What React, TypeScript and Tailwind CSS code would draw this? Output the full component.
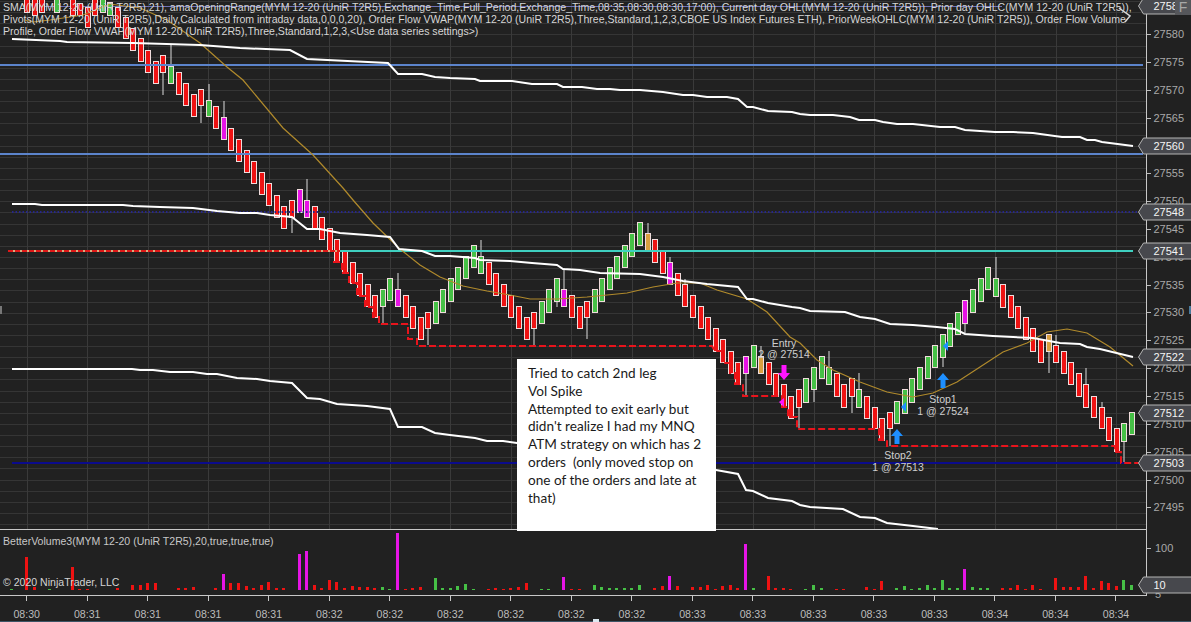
type Color = "r" | "g" | "m" | "o";
type Bar = [number, number, Color, number?, number?];

const fills: Record<Color, string> = { r: "#ee1212", g: "#46c046", m: "#e614e6", o: "#d9a040" };
const u = undefined;

const barX = (i: number) => 26.7 + 7.566 * i;

// body top, body bottom, colour, wick top, wick bottom (all in page px)
const bars: (Bar | null)[] = [
  [-10, 12, "r"], [-7, 15, "r"], [-10, 12, "r"], null, [-10, 12, "g"], null, [-7, 15, "r"], [3, 15, "r"],
  [7, 27, "r"], [-7, 15, "r"], [-10, 12, "g"], [2, 15, "g"], [7, 27, "r"], [17, 38, "r"], [28, 50, "r"], [38, 61, "r"],
  [50, 72, "r"], [61, 83, "r"], [55, 72, "r", u, 95], [66, 83, "g", 44], [72, 94, "r"], [83, 105, "r"], [94, 116, "r"], [89, 105, "r", u, 123],
  [100, 116, "g", 84], [106, 128, "r"], [117, 139, "m", 101], [128, 150, "r"], [139, 161, "r"], [150, 172, "r"], [161, 183, "r"], [172, 194, "r"],
  [183, 205, "r"], [195, 217, "r"], [206, 228, "r"], [200, 217, "r", u, 233], [189, 212, "m"], [200, 217, "m", 179], [206, 228, "r"], [217, 239, "r"],
  [228, 251, "r"], [239, 262, "r"], [251, 273, "r"], [262, 283, "r"], [273, 295, "r"], [284, 306, "r"], [295, 317, "r"], [289, 306, "g", u, 323],
  [278, 300, "g"], [289, 306, "m", 273], [295, 317, "r"], [306, 328, "r"], [317, 339, "r"], [312, 328, "r", u, 345], [301, 323, "g"], [289, 312, "g"],
  [278, 301, "g"], [267, 289, "g"], [256, 278, "g"], [245, 267, "g"], [256, 273, "g", 240], [262, 284, "r"], [273, 295, "r"], [284, 306, "r"],
  [295, 317, "r"], [306, 328, "r"], [317, 339, "r"], [312, 328, "r", u, 345], [301, 323, "g"], [289, 312, "g"], [278, 301, "g", u, 307], [289, 306, "m", 268],
  [295, 317, "r"], [306, 328, "r"], [301, 317, "r", u, 339], [289, 312, "g"], [278, 301, "g"], [267, 289, "g"], [256, 278, "g"], [245, 267, "g"],
  [233, 256, "g"], [222, 245, "g"], [233, 251, "o", 223], [239, 262, "r"], [251, 273, "r"], [262, 284, "m", 257], [273, 295, "r"], [284, 306, "r", 279],
  [295, 317, "r"], [306, 328, "r"], [317, 339, "r"], [328, 351, "r"], [339, 362, "r"], [351, 373, "r"], [362, 384, "r"], [356, 373, "m", u, 396],
  [345, 367, "g"], [356, 373, "o", 346], [362, 384, "r"], [373, 396, "r"], [384, 407, "r"], [396, 418, "r"], [389, 407, "r", u, 428], [378, 402, "g"],
  [367, 389, "g", u, 402], [356, 378, "g"], [367, 384, "g", 351], [373, 396, "r"], [384, 407, "r"], [378, 396, "r", u, 413], [389, 407, "g", 373], [396, 418, "r"],
  [407, 428, "r"], [418, 440, "r"], [412, 428, "r", u, 446], [401, 423, "g"], [389, 413, "g"], [378, 402, "g"], [367, 389, "g"], [356, 378, "g"],
  [345, 367, "g"], [334, 357, "g", u, 367], [323, 346, "g"], [312, 334, "g"], [300, 323, "m", u, 333], [289, 312, "g"], [278, 301, "g"], [267, 289, "g"],
  [278, 296, "g", 257], [284, 307, "r"], [295, 317, "r"], [306, 328, "r"], [317, 339, "r"], [328, 351, "r"], [339, 362, "r"], [334, 351, "o", u, 373],
  [345, 362, "r", 335], [351, 373, "r"], [362, 384, "r"], [373, 396, "r"], [384, 407, "r", 368], [396, 417, "r"], [407, 428, "r", 402], [417, 440, "r"],
  [428, 451, "r"], [423, 441, "g", u, 462], [412, 434, "g"],
];

const volumes: [number, number, Color][] = [
  [-2, 1, "g"], [0, 33, "r"], [1, 3, "r"], [3, 1, "g"], [6, 23, "r"], [7, 1, "r"], [8, 1, "r"], [12, 2, "r"], [14, 5, "r"], [15, 5, "r"], [16, 7, "r"], [17, 7, "r"],
  [20, 2, "r"], [21, 2, "r"], [22, 3, "r"], [25, 2, "r"], [26, 16, "m"], [27, 7, "r"], [28, 7, "r"], [29, 4, "r"], [30, 2, "r"], [31, 5, "r"], [32, 8, "r"], [33, 2, "r"], [34, 2, "r"],
  [36, 36, "m"], [37, 39, "m"], [38, 5, "r"], [39, 2, "r"], [40, 10, "r"], [41, 8, "r"], [42, 2, "r"], [43, 4, "r"], [44, 3, "r"], [45, 3, "r"], [46, 2, "r"], [47, 3, "g"], [48, 1, "g"], [49, 57, "m"],
  [50, 1, "r"], [51, 2, "r"], [52, 3, "r"], [54, 12, "g"], [55, 2, "g"], [56, 2, "g"], [57, 4, "g"], [58, 6, "g"], [59, 1, "g"], [61, 1, "r"], [62, 2, "r"], [63, 1, "r"], [64, 2, "r"], [65, 3, "r"], [66, 7, "r"],
  [68, 1, "g"], [69, 1, "g"], [71, 13, "m"], [72, 1, "r"], [73, 1, "r"], [75, 5, "g"], [76, 3, "g"], [77, 2, "g"], [78, 2, "g"], [79, 2, "g"], [80, 2, "g"], [81, 5, "g"], [83, 2, "r"], [84, 4, "r"], [85, 14, "m"], [86, 4, "r"],
  [88, 3, "r"], [89, 3, "r"], [90, 5, "r"], [91, 1, "r"], [92, 4, "r"], [93, 5, "r"], [94, 2, "r"], [95, 46, "m"], [96, 2, "g"], [98, 14, "r"], [99, 2, "r"], [100, 2, "r"], [101, 1, "r"],
  [103, 1, "g"], [104, 5, "g"], [105, 2, "g"], [107, 1, "r"], [108, 1, "r"], [111, 3, "r"], [112, 1, "r"], [113, 9, "r"], [115, 2, "g"], [116, 4, "g"], [117, 1, "g"], [118, 2, "g"], [119, 5, "g"], [120, 2, "g"], [121, 10, "g"],
  [122, 2, "g"], [123, 2, "g"], [124, 21, "m"], [125, 3, "g"], [126, 2, "g"], [127, 2, "g"], [129, 2, "r"], [130, 2, "r"], [131, 5, "r"], [132, 1, "r"], [133, 5, "r"], [134, 1, "r"], [136, 12, "r"], [137, 3, "r"], [138, 3, "r"],
  [139, 3, "r"], [140, 14, "r"], [141, 2, "r"], [142, 9, "r"], [143, 7, "r"], [144, 4, "r"], [145, 10, "g"], [146, 5, "g"],
];

const upperBand = "12,39 60,41 67,42 133,43 200,45 240,48 290,50 307,59 388,63 398,74 422,74 435,77 450,78 475,79 480,81 512,81 532,84 557,84 563,87 582,87 597,89 610,89 620,90 640,90 663,92 683,95 693,95 707,97 727,97 738,99 747,107 753,107 768,111 792,112 800,114 810,115 833,115 850,117 859,120 875,120 883,122 897,124 913,124 940,127 955,127 965,130 980,131 995,132 1013,132 1033,133 1062,137 1080,137 1087,140 1095,140 1102,142 1133,146";
const midBand = "12,204 35,204 42,205 123,205 133,206 160,207 193,208 217,211 240,213 257,213 270,215 292,217 307,229 320,229 340,233 367,235 390,237 399,249 422,251 435,256 450,256 475,258 480,260 510,261 532,263 557,265 563,269 580,270 600,273 640,274 663,277 683,281 707,284 738,287 747,299 753,299 768,303 792,307 800,308 810,311 845,312 860,317 875,319 890,324 913,325 937,327 955,329 965,334 993,336 1013,337 1033,338 1060,343 1080,344 1087,347 1100,349 1133,357";
const lowerBand = "12,369 132,369 140,370 153,370 170,372 193,372 207,374 217,374 237,378 257,379 270,381 292,383 307,398 320,399 337,404 367,406 390,409 398,427 422,427 435,433 450,435 475,438 487,441 503,441 517,443 716,470 738,474 746,490 753,491 768,498 792,501 800,505 810,507 843,509 860,517 875,518 887,523 913,526 938,529";
const sma = "25,20 33,22 50,20 83,15 110,4 140,8 167,20 200,43 227,67 243,80 283,128 313,155 343,188 353,200 373,223 400,249 420,265 440,277 463,286 487,291 510,295 530,299 557,299 587,297 627,293 653,287 677,283 700,283 717,290 747,299 767,312 790,337 800,343 817,360 833,370 860,382 887,392 913,397 933,393 957,382 980,367 1003,352 1027,343 1047,332 1067,329 1087,333 1110,347 1133,366";
const stopTrail = "333,262 342,262 342,273 349,273 349,283 357,283 357,296 365,296 365,307 373,307 373,317 379,317 379,324 408,324 408,339 417,339 417,346 712,346 715,351 722,351 722,363 730,363 730,373 735,373 735,384 743,384 743,396 776,396 782,396 782,407 788,407 788,417 797,417 797,429 875,429 879,429 879,440 887,440 887,446 1115,446 1115,452 1121,452 1121,463 1140,463";

const priceLabels: [string, number][] = [
  ["27580", 34], ["27575", 62], ["27570", 90], ["27565", 118], ["27555", 173], ["27550", 201], ["27545", 229], ["27540", 257],
  ["27535", 285], ["27530", 312], ["27525", 340], ["27520", 368], ["27515", 396], ["27510", 424], ["27505", 452], ["27500", 480], ["27495", 507],
];
const priceTags: [string, number][] = [
  ["2758", 6], ["27560", 146], ["27548", 212], ["27541", 251], ["27522", 357], ["27512", 413], ["27503", 463],
];
const timeLabels = ["08:30", "08:31", "08:31", "08:31", "08:31", "08:32", "08:32", "08:32", "08:32", "08:32", "08:32", "08:33", "08:33", "08:33", "08:33", "08:33", "08:34", "08:34", "08:34"];
const gridYs = Array.from({ length: 48 }, (_, k) => Math.round(1 + k * 11.13) + 0.5);
const gridXs = timeLabels.map((_, k) => Math.round(26.7 + 60.53 * k) + 0.5);

function Tag({ label, y }: { label: string; y: number }) {
  return (
    <g>
      <polygon
        points={`1138.5,${y} 1143.5,${y - 8} 1192,${y - 8} 1192,${y + 8} 1143.5,${y + 8}`}
        fill="#47484d"
        stroke="#b5b5b5"
      />
      <text x="1153.5" y={y + 4} fill="#f4f4f4" fontSize="11">{label}</text>
    </g>
  );
}

function UpArrow({ x, y }: { x: number; y: number }) {
  return <polygon points={`${x},${y} ${x + 6},${y + 7} ${x + 2.5},${y + 7} ${x + 2.5},${y + 15} ${x - 2.5},${y + 15} ${x - 2.5},${y + 7} ${x - 6},${y + 7}`} fill="#1e8fff" />;
}

function PriceChart() {
  return (
    <svg className="block h-[529px] w-[1146px]" viewBox="0 0 1146 529">
      {gridYs.map((y) => <line key={y} x1="0" x2="1146" y1={y} y2={y} stroke="#353535" />)}
      {gridXs.map((x) => <line key={x} x1={x} x2={x} y1="0" y2="529" stroke="#3a3a3a" />)}
      <line x1="40" x2="1002" y1="6.5" y2="6.5" stroke="#6e72b4" />
      {bars.map((b, i) => {
        if (!b) return null;
        const left = Math.round(barX(i) - 2.5);
        return (
          <g key={i}>
            {(b[3] !== undefined || b[4] !== undefined) && (
              <line x1={left + 3} x2={left + 3} y1={b[3] ?? b[0]} y2={b[4] ?? b[1]} stroke="#dcdcdc" />
            )}
            <rect x={left + 0.5} y={b[0] + 0.5} width="5" height={b[1] - b[0]} fill={fills[b[2]]} stroke="#f0dcdc" />
          </g>
        );
      })}
      <line x1="0" x2="1143" y1="65" y2="65" stroke="#5c84cc" strokeWidth="2" />
      <line x1="0" x2="1143" y1="154" y2="154" stroke="#5c84cc" strokeWidth="2" />
      <line x1="12" x2="1143" y1="212" y2="212" stroke="#26278a" strokeWidth="2" strokeDasharray="1.5 2" />
      <line x1="8" x2="340" y1="251" y2="251" stroke="#d8b080" strokeWidth="2" />
      <line x1="8" x2="340" y1="251" y2="251" stroke="#e01818" strokeWidth="2" strokeDasharray="5 2" />
      <line x1="340" x2="1133" y1="251" y2="251" stroke="#3fd0c0" strokeWidth="2" />
      <line x1="12" x2="1125" y1="463" y2="463" stroke="#0b0b8c" strokeWidth="2" />
      <polyline points={sma} fill="none" stroke="#b08a2c" strokeWidth="1.2" />
      <polyline points={upperBand} fill="none" stroke="#ffffff" strokeWidth="2" />
      <polyline points={midBand} fill="none" stroke="#ffffff" strokeWidth="2" />
      <polyline points={lowerBand} fill="none" stroke="#ffffff" strokeWidth="2" />
      <polyline points={stopTrail} fill="none" stroke="#e8141c" strokeWidth="2" strokeDasharray="7 3" />
      <polygon points="784,380 790,373 786.5,373 786.5,365 781.5,365 781.5,373 778,373" fill="#ff14ff" />
      <polygon points="779,402 784,398 784,407" fill="#ff14ff" />
      <UpArrow x={897} y={429} />
      <UpArrow x={943} y={373} />
      <polygon points="901,407 906,402 906,412" fill="#1e8fff" />
      <polygon points="943,346 948,341 948,351" fill="#1e8fff" />
      <g fill="#cfcfcf" fontSize="10.5" textAnchor="middle">
        <text x="784" y="347">Entry</text>
        <text x="784" y="358">2 @ 27514</text>
        <text x="943" y="403">Stop1</text>
        <text x="943" y="415">1 @ 27524</text>
        <text x="898" y="459">Stop2</text>
        <text x="898" y="471">1 @ 27513</text>
      </g>
      <polyline points="1119,8 1130,16 1125,22" fill="none" stroke="#d8d8d8" strokeWidth="1.5" />
    </svg>
  );
}

function PriceAxis() {
  return (
    <svg className="relative z-10 block h-[529px] w-[44px] overflow-visible" viewBox="1147 0 44 529">
      {priceLabels.map(([label, y]) => (
        <g key={label}>
          <line x1="1147" x2="1151" y1={y + 0.5} y2={y + 0.5} stroke="#bdbdbd" />
          <text x="1153.5" y={y + 4} fill="#a9a9a9" fontSize="11">{label}</text>
        </g>
      ))}
      {priceTags.map(([label, y]) => <Tag key={label} label={label} y={y} />)}
    </svg>
  );
}

function VolumePanel() {
  return (
    <div className="relative h-[66px] w-[1147px] border-r border-b border-[#c8c8c8]">
      <svg className="absolute inset-0 block h-[66px] w-[1146px]" viewBox="0 530 1146 66">
        {volumes.map(([i, h, c]) => (
          <rect key={i} x={Math.round(barX(i) - 1.5)} y={590 - h} width="3" height={h} fill={fills[c]} />
        ))}
      </svg>
      <p className="relative pt-[5px] pl-[3px] text-[10.55px] leading-[12px] text-[#c8c8c8]">BetterVolume3(MYM 12-20 (UniR T2R5),20,true,true,true)</p>
      <p className="absolute left-[3px] top-[46px] text-[10.55px] leading-[12px] text-[#d4d4d4]">© 2020 NinjaTrader, LLC</p>
    </div>
  );
}

function VolumeAxis() {
  return (
    <svg className="relative z-10 block h-[66px] w-[44px] overflow-visible" viewBox="1147 530 44 66">
      <line x1="1147" x2="1151" y1="548.5" y2="548.5" stroke="#bdbdbd" />
      <text x="1155" y="552" fill="#a9a9a9" fontSize="11">100</text>
      <text x="1155" y="598" fill="#a9a9a9" fontSize="11">5</text>
      <Tag label="10" y={585} />
    </svg>
  );
}

export default function App() {
  return (
    <div className="relative flex h-[622px] w-[1191px] flex-col overflow-hidden bg-[#212121] font-['Liberation_Sans',Arial,sans-serif]">
      <div className="flex">
        <div className="h-[530px] w-[1147px] border-r border-b border-[#c8c8c8]">
          <PriceChart />
        </div>
        <PriceAxis />
      </div>
      <div className="flex">
        <VolumePanel />
        <VolumeAxis />
      </div>
      <div className="ml-[-3.56px] flex grow">
        {timeLabels.map((t, k) => (
          <div key={k} className="flex w-[60.53px] shrink-0 flex-col items-center">
            <div className="h-[5px] w-px bg-[#c8c8c8]" />
            <span className="mt-[7px] text-[10.6px] leading-[12px] text-[#bcbcbc]">{t}</span>
          </div>
        ))}
      </div>
      <div className="relative h-[1px] bg-[#3d5566]">
        <div className="absolute bottom-0 left-[593px] h-[3px] w-[6px] bg-[#dce8f0]" />
      </div>

      {/* indicator legend sits on top of the chart */}
      <div className="absolute left-[3px] top-[1px] w-[1134px] overflow-hidden whitespace-nowrap text-[10.55px] leading-[12px] text-[#d6d6d6]">
        <p>SMA(MYM 12-20 (UniR T2R5),21), amaOpeningRange(MYM 12-20 (UniR T2R5),Exchange_Time,Full_Period,Exchange_Time,08:35,08:30,08:30,17:00), Current day OHL(MYM 12-20 (UniR T2R5)), Prior day OHLC(MYM 12-20 (UniR T2R5)),</p>
        <p>Pivots(MYM 12-20 (UniR T2R5),Daily,Calculated from intraday data,0,0,0,20), Order Flow VWAP(MYM 12-20 (UniR T2R5),Three,Standard,1,2,3,CBOE US Index Futures ETH), PriorWeekOHLC(MYM 12-20 (UniR T2R5)), Order Flow Volume</p>
        <p>Profile, Order Flow VWAP(MYM 12-20 (UniR T2R5),Three,Standard,1,2,3,&lt;Use data series settings&gt;)</p>
      </div>
      <div className="absolute right-0 top-0 z-20 flex h-[15px] w-[16px] items-center justify-center bg-[#56575b] text-[14px] text-[#a8a8a8]">F</div>
      <div className="absolute left-0 top-[306px] h-[8px] w-[2px] bg-[#777777]" />
      <div className="absolute right-0 top-[306px] z-20 h-[8px] w-[2px] bg-[#4a7a9c]" />

      {/* pasted note */}
      <div className="absolute left-[517px] top-[359px] h-[172px] w-[199px] bg-white pt-[6px] pl-[11px] font-['Lato',sans-serif] text-[13.6px] leading-[17.8px] whitespace-pre text-[#1a1a1a]">
        <p>Tried to catch 2nd leg</p>
        <p>Vol Spike</p>
        <p>Attempted to exit early but</p>
        <p>didn't realize I had my MNQ</p>
        <p>ATM strategy on which has 2</p>
        <p>orders  (only moved stop on</p>
        <p>one of the orders and late at</p>
        <p>that)</p>
      </div>
    </div>
  );
}
